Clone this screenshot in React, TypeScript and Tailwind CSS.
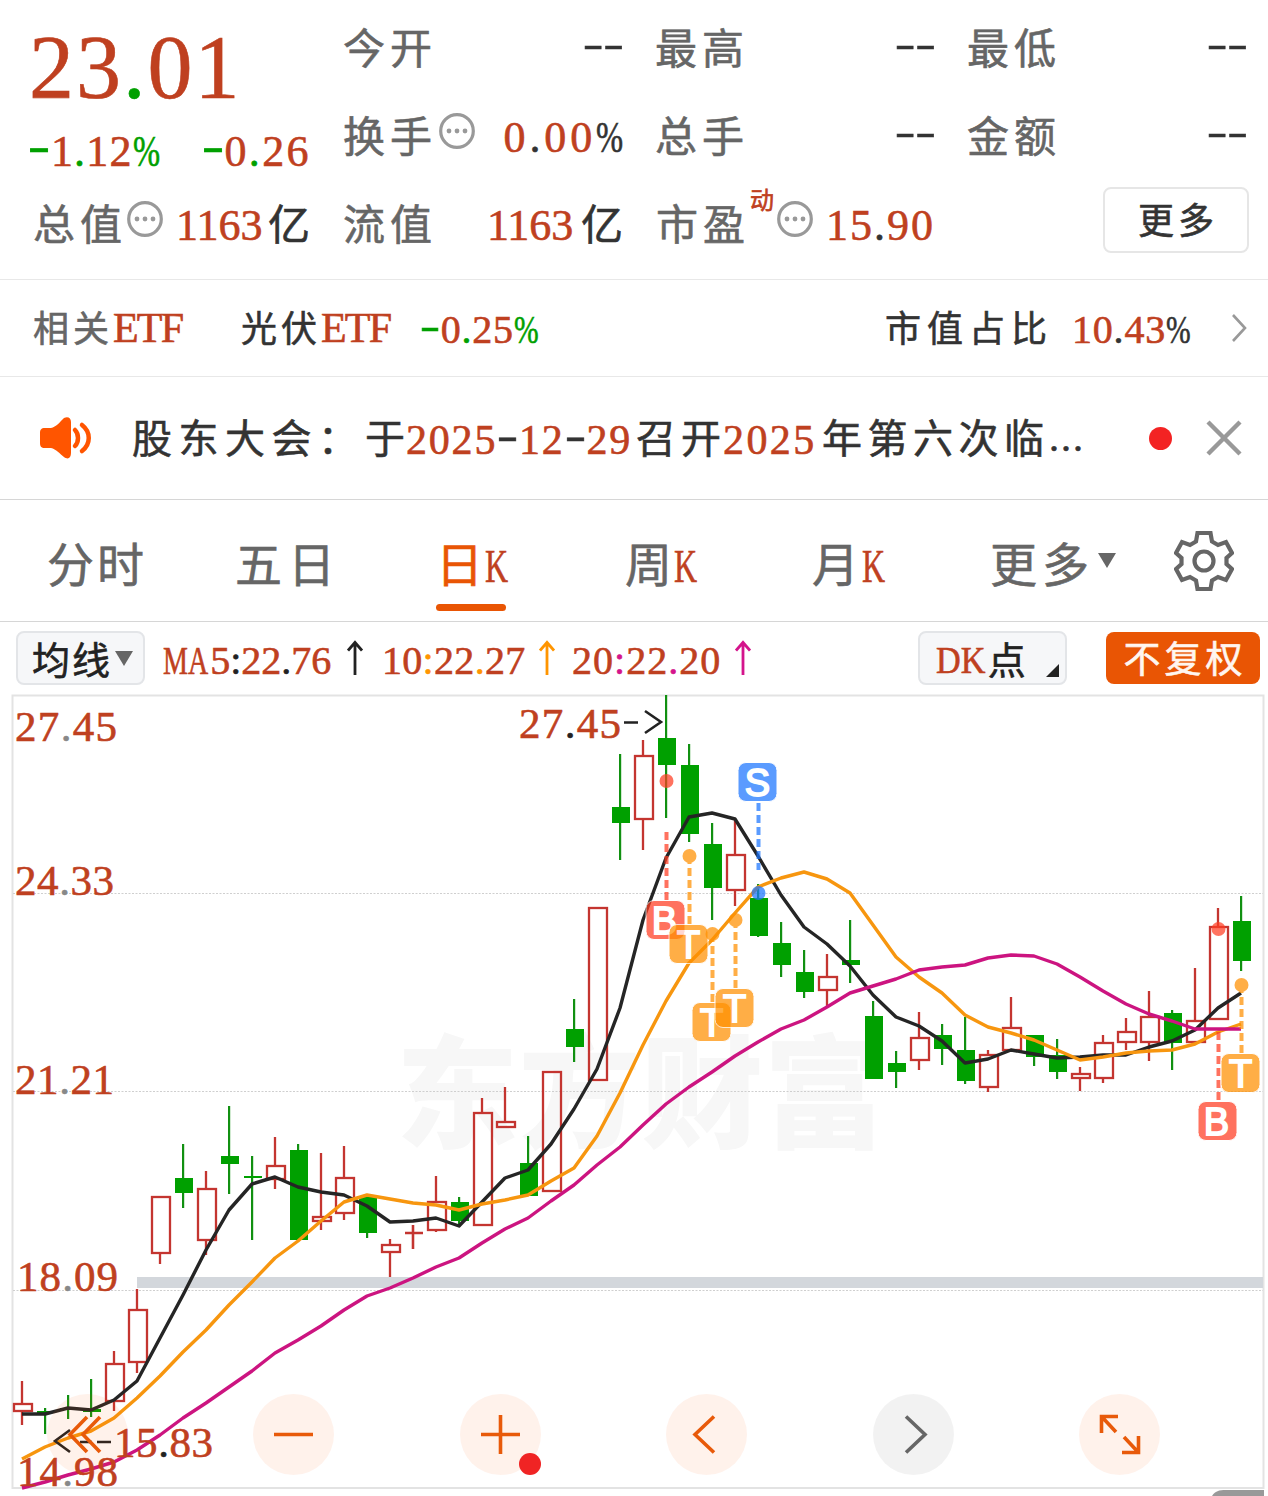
import type { ReactNode } from 'react';
import clsx from 'clsx';

type Candle = [high: number, top: number, bottom: number, low: number, up: 0 | 1];

const STEP = 23;
const X0 = 22;

const CANDLES: Candle[] = [
  [1381, 1403, 1411, 1425, 1], [1408, 1411, 1413, 1434, 0], [1395, 1408, 1410, 1419, 0], [1379, 1409, 1412, 1417, 0],
  [1351, 1363, 1401, 1411, 1], [1289, 1309, 1362, 1373, 1], [1196, 1196, 1253, 1264, 1], [1144, 1178, 1193, 1208, 0],
  [1171, 1188, 1240, 1255, 1], [1106, 1156, 1164, 1194, 0], [1156, 1176, 1177, 1240, 0], [1137, 1165, 1179, 1189, 1],
  [1144, 1150, 1240, 1240, 0], [1153, 1216, 1221, 1230, 1], [1146, 1177, 1213, 1220, 1], [1196, 1197, 1233, 1238, 0],
  [1239, 1244, 1252, 1277, 1], [1225, 1233, 1233, 1249, 1], [1176, 1201, 1230, 1232, 1], [1197, 1202, 1221, 1227, 0],
  [1098, 1112, 1225, 1225, 1], [1087, 1121, 1127, 1127, 1], [1136, 1163, 1196, 1196, 0], [1071, 1071, 1191, 1192, 1],
  [999, 1029, 1047, 1062, 0], [907, 907, 1080, 1079, 1], [754, 807, 823, 860, 0], [740, 755, 819, 850, 1],
  [695, 738, 765, 818, 0], [744, 765, 834, 842, 0], [823, 844, 888, 920, 0], [820, 854, 890, 906, 1],
  [884, 898, 936, 937, 0], [922, 943, 965, 977, 0], [950, 972, 992, 998, 0], [954, 976, 990, 1006, 1],
  [920, 960, 965, 983, 0], [1001, 1016, 1079, 1079, 0], [1051, 1063, 1072, 1088, 0], [1012, 1037, 1060, 1070, 1],
  [1024, 1035, 1049, 1065, 0], [1017, 1050, 1081, 1084, 0], [1050, 1054, 1087, 1092, 1], [997, 1027, 1050, 1052, 1],
  [1035, 1035, 1057, 1066, 0], [1039, 1055, 1072, 1079, 0], [1067, 1073, 1078, 1091, 1], [1035, 1042, 1078, 1083, 1],
  [1018, 1031, 1042, 1050, 1], [991, 1016, 1042, 1061, 1], [1010, 1013, 1043, 1070, 0], [968, 1020, 1042, 1043, 1],
  [908, 926, 1019, 1019, 1], [896, 921, 961, 971, 0],
];

const MA5 = [
  1414, 1414, 1408, 1410, 1400, 1381, 1338, 1295, 1250, 1210, 1184, 1177, 1187, 1192, 1195, 1206, 1222, 1221,
  1218, 1226, 1202, 1178, 1170, 1144, 1109, 1069, 1008, 920, 858, 817, 813, 819, 856, 895, 927, 944, 966, 995,
  1017, 1026, 1041, 1063, 1059, 1050, 1054, 1058, 1057, 1055, 1055, 1047, 1041, 1030, 1008, 993,
];
const MA10 = [
  1459, 1447, 1438, 1431, 1418, 1398, 1376, 1352, 1330, 1305, 1282, 1258, 1241, 1221, 1202, 1195, 1199, 1203,
  1205, 1210, 1204, 1200, 1195, 1181, 1168, 1136, 1093, 1045, 1001, 963, 940, 913, 887, 878, 872, 879, 893, 925,
  957, 977, 993, 1015, 1027, 1033, 1040, 1050, 1060, 1057, 1053, 1051, 1050, 1044, 1032, 1024,
];
const MA20 = [
  1488, 1482, 1475, 1469, 1462, 1450, 1435, 1418, 1403, 1387, 1371, 1353, 1340, 1326, 1310, 1296, 1288, 1278,
  1267, 1258, 1243, 1229, 1218, 1201, 1185, 1165, 1147, 1125, 1104, 1087, 1072, 1056, 1042, 1029, 1020, 1007,
  993, 986, 979, 970, 967, 965, 958, 955, 956, 964, 977, 991, 1004, 1014, 1021, 1029, 1029, 1029,
];

const line = (ys: number[]) => ys.map((y, i) => `${X0 + i * STEP},${y}`).join(' ');

const MARK_COLORS = { B: '#ff3d22', T: '#ff9000', S: '#1c76ff' };

// dot: price level, from/to: dashed connector, box: top of the badge
const MARKS: { k: 'B' | 'T' | 'S'; x: number; dot: number; from: number; to: number; box: number }[] = [
  { k: 'S', x: 758, dot: 893, from: 803, to: 870, box: 763 },
  { k: 'B', x: 666, dot: 781, from: 832, to: 900, box: 901 },
  { k: 'T', x: 689, dot: 856, from: 856, to: 924, box: 925 },
  { k: 'T', x: 712, dot: 934, from: 934, to: 1002, box: 1003 },
  { k: 'T', x: 735, dot: 920, from: 920, to: 988, box: 989 },
  { k: 'B', x: 1218, dot: 929, from: 1032, to: 1100, box: 1102 },
  { k: 'T', x: 1241, dot: 985, from: 985, to: 1053, box: 1054 },
];

const FONT = "font-['Liberation_Serif','Noto_Sans_CJK_SC',serif]";

// Digits and latin letters are red, everything else keeps the inherited colour
function Rich({ children, className }: { children: string; className?: string }) {
  return (
    <span className={clsx('whitespace-nowrap', className)}>
      {children.split(/([0-9]+|[A-Z]+|-|%)/).map((s, i) => {
        if (!s) return null;
        if (s === '-')
          return <span key={i} className="inline-block w-[0.52em] origin-left -translate-y-[0.11em] scale-x-150 tracking-normal">-</span>;
        if (s === '%')
          return <span key={i} className="inline-block w-[0.61em] origin-left scale-x-[0.74] tracking-normal">%</span>;
        if (s === 'K')
          return <span key={i} className="inline-block w-[0.5em] origin-left scale-x-[0.68] tracking-normal text-[#bf4020]">K</span>;
        if (s === 'MA')
          return <span key={i} className="inline-block w-[1.18em] origin-left scale-x-[0.7] text-[#bf4020]">MA</span>;
        if (s === 'DK')
          return <span key={i} className="inline-block w-[1.36em] origin-left scale-x-[0.9] text-[#bf4020]">DK</span>;
        return <span key={i} className={/[0-9A-Z]/.test(s) ? 'text-[#bf4020]' : undefined}>{s}</span>;
      })}
    </span>
  );
}

function Label({ children }: { children: string }) {
  return <span className="whitespace-nowrap text-[42px] tracking-[5px] text-[#666]">{children}</span>;
}

function Empty() {
  return <span className="ml-auto -mr-px origin-center -translate-y-[7px] scale-y-[0.65] text-[62px] leading-none">--</span>;
}

function More({ className }: { className?: string }) {
  return (
    <svg viewBox="0 0 38 38" className={clsx('size-[38px] shrink-0', className)}>
      <circle cx="19" cy="19" r="16.3" fill="none" stroke="#999" strokeWidth="3.2" />
      <circle cx="11" cy="19" r="2.4" fill="#999" />
      <circle cx="19" cy="19" r="2.4" fill="#999" />
      <circle cx="27" cy="19" r="2.4" fill="#999" />
    </svg>
  );
}

function Cell({ children, className }: { children: ReactNode; className?: string }) {
  return <div className={clsx('flex h-[88px] items-center pt-1', className)}>{children}</div>;
}

function Quote() {
  return (
    <section className="grid h-[280px] grid-cols-[280px_280px_280px_280px] grid-rows-[88px_88px_88px] content-start gap-x-8 border-b border-[#e8e8e8] pt-1 pl-[31px]">
      <div className="row-span-2 flex flex-col">
        <div className="-ml-[2px] pt-[19px] text-[90px] leading-none tracking-[2px] text-[#00a000]">
          <Rich>23.01</Rich>
        </div>
        <div className="-ml-[3px] flex pt-[17px] text-[44px] leading-none text-[#00a000]">
          <Rich className="w-[175px] tracking-[1.2px]">-1.12%</Rich>
          <Rich className="tracking-[2.4px]">-0.26</Rich>
        </div>
      </div>
      <Cell><Label>今开</Label><Empty /></Cell>
      <Cell><Label>最高</Label><Empty /></Cell>
      <Cell><Label>最低</Label><Empty /></Cell>
      <Cell>
        <Label>换手</Label>
        <More className="ml-px -translate-y-[7px]" />
        <Rich className="ml-auto text-[44px] tracking-[3.9px]">0.00%</Rich>
      </Cell>
      <Cell><Label>总手</Label><Empty /></Cell>
      <Cell><Label>金额</Label><Empty /></Cell>
      <Cell className="pl-[2px]">
        <Label>总值</Label>
        <More className="-ml-px -translate-y-[7px]" />
        <Rich className="ml-[12px] w-[92px] text-[44px]">1163</Rich>
        <span className="text-[42px]">亿</span>
      </Cell>
      <Cell>
        <Label>流值</Label>
        <Rich className="ml-auto w-[94px] text-[44px]">1163</Rich>
        <span className="text-[42px]">亿</span>
      </Cell>
      <Cell className="pl-px">
        <Label>市盈</Label>
        <span className="mb-[50px] w-[25px] text-2xl text-[#bf4020]">动</span>
        <More className="ml-px -translate-y-[7px]" />
        <Rich className="ml-[12px] text-[44px] tracking-[2px]">15.90</Rich>
      </Cell>
      <Cell className="justify-end">
        <button className="mb-[12px] -mr-[2px] h-[66px] w-[146px] rounded-lg border-2 border-[#e6e6e6] pt-[3px] pl-1 text-[36px] tracking-[4px]">
          更多
        </button>
      </Cell>
    </section>
  );
}

function EtfRow() {
  return (
    <section className="flex h-[97px] items-center border-b border-[#e8e8e8] pl-[33px]">
      <span className="w-[80px] pt-[3px] text-[36px] tracking-[4px] whitespace-nowrap text-[#666]">相关</span>
      <Rich className="w-[128px] text-[42px] tracking-[-1.8px]">ETF</Rich>
      <span className="w-[80px] pt-[3px] text-[36px] tracking-[4px] whitespace-nowrap">光伏</span>
      <Rich className="w-[99px] text-[42px] tracking-[-1.8px]">ETF</Rich>
      <Rich className="pt-[3px] text-[40px] tracking-[0.7px] text-[#00a000]">-0.25%</Rich>
      <span className="ml-auto w-[187px] pt-[3px] text-[36px] tracking-[6px] whitespace-nowrap">市值占比</span>
      <Rich className="w-[158px] pt-[3px] text-[40px] tracking-[0.8px]">10.43%</Rich>
      <svg viewBox="0 0 18 30" className="mr-5 h-[30px] w-[18px]">
        <path d="M3 2 L15 15 L3 28" fill="none" stroke="#999" strokeWidth="2.6" />
      </svg>
    </section>
  );
}

function Notice() {
  return (
    <section className="flex h-[123px] items-center border-b border-[#d6d6d6] pl-[38px] text-[40px] whitespace-nowrap">
      <svg viewBox="0 0 56 46" className="h-[46px] w-[56px] shrink-0">
        <path
          d="M7 13 H13 C18 12 22 7 26 3 C30 1 33 3 33 7 V38 C33 43 30 45 26 42 C22 39 18 34 13 33 H7 C3 33 2 31 2 28 V18 C2 15 3 13 7 13 Z"
          fill="#ff5500"
        />
        <path d="M37 15 C41 19 41 27 37 31 M44 10 C53 17 53 29 44 36" fill="none" stroke="#ff5500" strokeWidth="4.5" strokeLinecap="round" />
      </svg>
      <span className="ml-[38px] w-[233px] pt-1 tracking-[6.5px]">股东大会：</span>
      <span className="w-[41px] pt-1">于</span>
      <Rich className="w-[230px] pt-[3px] text-[42px] tracking-[1.8px]">2025-12-29</Rich>
      <span className="w-[87px] pt-1 tracking-[5px]">召开</span>
      <Rich className="w-[99px] pt-[3px] text-[42px] tracking-[2.4px]">2025</Rich>
      <span className="w-[227px] pt-1 tracking-[5.5px]">年第六次临</span>
      <span className="tracking-[2px]">...</span>
      <span className="ml-auto size-[23px] shrink-0 rounded-full bg-[#f32323]" />
      <svg viewBox="0 0 36 36" className="mr-[26px] ml-[34px] size-[36px] shrink-0">
        <path d="M2 2 L34 34 M34 2 L2 34" stroke="#999" strokeWidth="4.4" />
      </svg>
    </section>
  );
}

function Tabs() {
  return (
    <nav className="flex h-[122px] items-center border-b border-[#d6d6d6] pl-[47px] text-[47px] whitespace-nowrap text-[#666]">
      <span className="w-[188px] pt-3 tracking-[3px]">分时</span>
      <span className="w-[201px] pt-3 tracking-[6px]">五日</span>
      <div className="relative flex w-[189px] items-center self-stretch text-[#e95504]">
        <Rich className="pt-3 tracking-[2px]">日K</Rich>
        <span className="absolute top-[104px] left-0 h-[7px] w-[70px] rounded-full bg-[#e95504]" />
      </div>
      <Rich className="w-[187px] pt-3 tracking-[2px]">周K</Rich>
      <Rich className="w-[178px] pt-3 tracking-[3px]">月K</Rich>
      <span className="w-[108px] pt-3 tracking-[5px]">更多</span>
      <svg viewBox="0 0 18 15" className="h-[15px] w-[18px]">
        <path d="M0 0 H18 L9 15 Z" fill="#666" />
      </svg>
      <svg viewBox="0 0 60 60" className="ml-[58px] size-[60px]">
        <path
          d="M23.5 2 H36.5 L38 10.5 L44 14 L52 11 L58 22 L52.5 27 V33 L58 38 L52 49 L44 46 L38 49.5 L36.5 58 H23.5 L22 49.5 L16 46 L8 49 L2 38 L7.5 33 V27 L2 22 L8 11 L16 14 L22 10.5 Z"
          fill="none"
          stroke="#666"
          strokeWidth="4.2"
        />
        <circle cx="30" cy="30" r="9.5" fill="none" stroke="#666" strokeWidth="4.2" />
      </svg>
    </nav>
  );
}

function Up() {
  return (
    <svg viewBox="0 0 16 36" className="h-[36px] w-[16px]">
      <path d="M8 35 V3 M1 10.5 L8 2.5 L15 10.5" fill="none" stroke="currentColor" strokeWidth="2.8" />
    </svg>
  );
}

function MaBar() {
  return (
    <div className="flex h-[72px] items-center pl-4 text-[40px] text-[#222]">
      <button className="flex h-[54px] w-[129px] items-center rounded-lg border-2 border-[#e3e5e8] bg-[#f6f7f9] pl-[11px] text-[38px] tracking-[2px]">
        <span className="w-[86px] pt-[5px]">均线</span>
        <svg viewBox="0 0 18 15" className="h-[15px] w-[18px]">
          <path d="M0 0 H18 L9 15 Z" fill="#666" />
        </svg>
      </button>
      <Rich className="ml-[18px] w-[184px] pt-[5px]">MA5:22.76</Rich>
      <Up />
      <div className="ml-[19px] flex items-center text-[#ff9500]">
        <Rich className="w-[157px] pt-[5px] tracking-[0.3px]">10:22.27</Rich>
        <Up />
      </div>
      <div className="ml-[17px] flex items-center text-[#d4148c]">
        <Rich className="w-[163px] pt-[5px] tracking-[1px]">20:22.20</Rich>
        <Up />
      </div>
      <button className="relative ml-auto flex h-[54px] w-[149px] items-center rounded-lg border-2 border-[#e3e5e8] bg-[#f6f7f9] pl-[16px] text-[38px]">
        <Rich className="pt-[3px]">DK</Rich>
        <span className="pt-[5px]">点</span>
        <svg viewBox="0 0 13 13" className="absolute right-[6px] bottom-[6px] size-[13px]">
          <path d="M13 0 V13 H0 Z" fill="#222" />
        </svg>
      </button>
      <button className="mr-2 ml-[39px] h-[52px] w-[154px] rounded-lg bg-[#e95504] pt-[5px] pl-1 text-[37px] tracking-[4px] text-[#fff6f0]">
        不复权
      </button>
    </div>
  );
}

function AxisText({ x, y, w, dot = '#888', children }: { x: number; y: number; w: number; dot?: string; children: string }) {
  const [a, b] = children.split('.');
  return (
    <text x={x} y={y} fontSize="43" textLength={w} fill="#bf4020" stroke="#bf4020" strokeWidth="0.6">
      {a}<tspan fill={dot} stroke={dot}>.</tspan>{b}
    </text>
  );
}

function Chart() {
  return (
    <svg viewBox="0 694 1268 802" className="block h-[802px] w-[1268px]">
      <text x="396" y="1138" fontSize="122" fontWeight="900" textLength="490" fill="#f7f7f7" fontFamily="Noto Sans CJK SC">
        东方财富
      </text>
      <path d="M12.5 695.5 H1263.5 V1488 H12.5 Z" fill="none" stroke="#e3e3e3" strokeWidth="2" />
      <path d="M13 893.5 H1263 M13 1091.5 H1263 M13 1290.5 H1263" stroke="#cfcfcf" strokeWidth="1" strokeDasharray="2 1.5" />
      <rect x="137" y="1277" width="1126" height="11" fill="#d3d7dc" />

      <AxisText x={15} y={741} w={102}>27.45</AxisText>
      <AxisText x={15} y={895} w={99}>24.33</AxisText>
      <AxisText x={15} y={1094} w={99}>21.21</AxisText>
      <AxisText x={17} y={1291} w={101}>18.09</AxisText>

      {CANDLES.map(([high, top, bottom, low, up], i) => {
        const x = X0 + i * STEP;
        if (!up)
          return (
            <g key={i} fill="#00a000">
              <rect x={x - 1} y={high} width="2.2" height={low - high} fill="#119011" />
              <rect x={x - 8} y={top} width="18" height={Math.max(bottom - top, 2)} />
            </g>
          );
        return (
          <g key={i} stroke="#c43530" strokeWidth="2.3" fill="none">
            <path d={`M${x} ${high} V${top} M${x} ${bottom} V${low}`} />
            {bottom === top ? (
              <path d={`M${x - 8} ${top} H${x + 10} M${x} ${high} V${low}`} />
            ) : (
              <rect x={x - 8} y={top + 1} width="18" height={bottom - top - 1} />
            )}
          </g>
        );
      })}

      <g fill="none" strokeWidth="3.4" strokeLinejoin="round">
        <polyline points={line(MA5)} stroke="#252525" />
        <polyline points={line(MA10)} stroke="#f7960f" />
        <polyline points={line(MA20)} stroke="#cc1480" />
      </g>

      <AxisText x={519} y={738} w={102} dot="#222">27.45</AxisText>
      <path d="M624 722.5 H638 M645 711 L661 722 L645 733" fill="none" stroke="#222" strokeWidth="2.6" />
      <path d="M70 1430 L55 1441 L70 1452 M80 1442 H92 M97 1442 H111" fill="none" stroke="#222" strokeWidth="2.6" />
      <AxisText x={114} y={1457} w={99} dot="#222">15.83</AxisText>
      <AxisText x={17} y={1486} w={101}>14.98</AxisText>

      {MARKS.map(({ k, x, dot, from, to, box }, i) => (
        <g key={i} opacity="0.72">
          <circle cx={x + 0.5} cy={dot} r="7" fill={MARK_COLORS[k]} />
          <path d={`M${x + 0.5} ${from} V${to}`} stroke={MARK_COLORS[k]} strokeWidth="4" strokeDasharray="8 4" />
          <rect x={x - 20} y={box - 0.5} width="39" height="39" rx="8" fill={MARK_COLORS[k]} stroke="#fff" strokeWidth="1" />
          <text
            x={k === 'B' ? x - 1.5 : x - 0.5}
            y={box + 33}
            fontSize="38"
            textAnchor="middle"
            fill="#fff"
            stroke="#fff"
            strokeWidth="1.8"
            fontFamily="Liberation Sans"
          >
            {k}
          </text>
        </g>
      ))}
      <path d="M1212 1496 C1215 1491 1219 1490 1226 1490 H1264 V1496 Z" fill="#999" />
    </svg>
  );
}

const TOOLS: { d: string; gray?: boolean; dot?: boolean }[] = [
  { d: 'M40 23 L23 40.5 L40 58 M53 23 L36 40.5 L53 58' },
  { d: 'M21 40.5 H60' },
  { d: 'M21 40.5 H60 M40.5 21 V60', dot: true },
  { d: 'M48 22.5 L29 40.5 L48 58.5' },
  { d: 'M33 22.5 L52 40.5 L33 58.5', gray: true },
  { d: 'M22.5 39 V22.5 H39 M23 23 L37 38 M59.5 42 V58.5 H43 M59 58 L45 43' },
];

function Toolbar() {
  return (
    <div className="absolute top-[700px] left-[47px] flex gap-[125.4px]">
      {TOOLS.map(({ d, gray, dot }) => (
        <button
          key={d}
          className={clsx('relative size-[81px] rounded-full', gray ? 'bg-black/5 text-[#666]' : 'bg-[#ff5500]/8 text-[#e85a0a]')}
        >
          <svg viewBox="0 0 81 81" className="size-full">
            <path d={d} fill="none" stroke="currentColor" strokeWidth="3.6" />
          </svg>
          {dot && <span className="absolute right-0 bottom-0 size-[22px] rounded-full bg-[#f02424]" />}
        </button>
      ))}
    </div>
  );
}

export default function App() {
  return (
    <main
      className={clsx(
        'h-[1496px] w-[1268px] overflow-hidden bg-white leading-none text-[#333] [-webkit-text-stroke:0.6px]',
        FONT,
      )}
    >
      <Quote />
      <EtfRow />
      <Notice />
      <Tabs />
      <MaBar />
      <div className="relative">
        <Chart />
        <Toolbar />
      </div>
    </main>
  );
}
